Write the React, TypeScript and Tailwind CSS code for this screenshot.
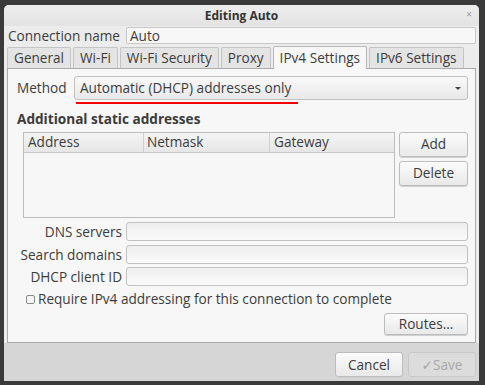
import React from "react";

const font = { fontFamily: '"Open Sans", "DejaVu Sans", sans-serif' };

const Field: React.FC<{ label: string }> = ({ label }) => (
  <div className="flex items-center h-[22.5px]">
    <div className="w-[110px] text-right pr-[4px]">{label}</div>
    <div className="flex-1 h-[19px] rounded-[3px] border border-[#c2c2c2] bg-gradient-to-b from-[#eeeeee] to-[#fafafa]" />
  </div>
);

const Btn: React.FC<{ label: string; className?: string; disabled?: boolean }> = ({ label, className = "", disabled }) => (
  <div
    className={`flex items-center justify-center rounded-[3px] border ${
      disabled ? "border-[#c8c8c8] text-[#a8a8a8] bg-[#dcdcdc]" : "border-[#bcbcbc] bg-gradient-to-b from-[#fbfbfb] to-[#e9e9e9] shadow-[0_1px_0_#d0d0d0]"
    } ${className}`}
  >
    {label}
  </div>
);

const tabs = ["General", "Wi-Fi", "Wi-Fi Security", "Proxy", "IPv4 Settings", "IPv6 Settings"];

export default function App() {
  return (
    <div className="w-[485px] h-[385px] bg-[#3a3a3a] pt-[5px] pl-[4px] text-[13.6px] text-[#3c3c3c] leading-none" style={font}>
      <div className="w-[475px] h-[376px] bg-[#ececec] rounded-t-[5px] flex flex-col overflow-hidden">
        {/* title bar */}
        <div className="h-[21px] flex items-center relative bg-gradient-to-b from-[#ededed] to-[#e3e3e3]">
          <div className="flex-1 text-center font-bold text-[12px] text-[#333]">Editing Auto</div>
          <div className="absolute right-[7px] top-[4px] text-[10px] text-[#9a9a9a]">×</div>
        </div>

        {/* connection name */}
        <div className="flex items-center h-[19px] pl-[4px] pr-[3px]">
          <div className="w-[118px]">Connection name</div>
          <div className="flex-1 h-[17px] border border-[#c8c8c8] bg-[#f7f7f7] rounded-[2px] flex items-center pl-[3px]">Auto</div>
        </div>

        {/* tabs */}
        <div className="flex items-end h-[23px] pl-[3px] gap-[2px]">
          {tabs.map((t) => {
            const active = t === "IPv4 Settings";
            return (
              <div
                key={t}
                className={`px-[6px] flex items-center border border-b-0 rounded-t-[2px] ${
                  active ? "h-[23px] bg-[#f7f7f7] border-[#b8b8b8] relative top-[1px]" : "h-[21px] bg-[#e4e4e4] border-[#c4c4c4]"
                }`}
              >
                {t}
              </div>
            );
          })}
        </div>

        {/* panel */}
        <div className="mx-[3px] h-[275px] border border-[#a9a9a9] bg-[#f7f7f7] pl-[8px] pr-[7px] pt-[7px]">
          <div className="flex items-center">
            <div className="w-[58px] pl-[1px]">Method</div>
            <div className="flex-1 h-[24px] relative rounded-[3px] border border-[#c0c0c0] bg-gradient-to-b from-[#f8f8f8] to-[#e9e9e9] flex items-center pl-[5px]">
              Automatic (DHCP) addresses only
              <div className="absolute right-[6px] top-[10px] w-0 h-0 border-l-[3px] border-r-[3px] border-t-[3px] border-l-transparent border-r-transparent border-t-[#444]" />
              <div className="absolute left-[1px] top-[25px] w-[222px] h-[2px] bg-[#f00000]" />
            </div>
          </div>

          <div className="font-bold mt-[12px] pl-[1px]">Additional static addresses</div>

          <div className="flex mt-[6px] pl-[7px] gap-[4px]">
            <div className="flex-1 h-[86px] border border-[#bdbdbd] bg-[#f7f7f7]">
              <div className="flex h-[20px] border-b border-[#c8c8c8] bg-gradient-to-b from-[#f4f4f4] to-[#e6e6e6]">
                <div className="w-[120px] border-r border-[#cfcfcf] flex items-center pl-[4px]">Address</div>
                <div className="w-[126px] border-r border-[#cfcfcf] flex items-center pl-[3px]">Netmask</div>
                <div className="flex-1 flex items-center pl-[4px]">Gateway</div>
              </div>
            </div>
            <div className="flex flex-col gap-[4px]">
              <Btn label="Add" className="w-[69px] h-[25px]" />
              <Btn label="Delete" className="w-[69px] h-[25px]" />
            </div>
          </div>

          <div className="flex flex-col mt-[3px]">
            <Field label="DNS servers" />
            <Field label="Search domains" />
            <Field label="DHCP client ID" />
          </div>

          <div className="flex items-center mt-[1px] pl-[10px] h-[20px]">
            <div className="w-[9px] h-[9px] border border-[#8a8a8a] rounded-[2px] bg-[#f4f4f4] mr-[3px]" />
            Require IPv4 addressing for this connection to complete
          </div>

          <div className="flex justify-end mt-[4px]">
            <Btn label="Routes…" className="w-[84px] h-[22px]" />
          </div>
        </div>

        {/* bottom bar */}
        <div className="flex-1 bg-[#d6d6d6] flex justify-end items-start pt-[9px] pr-[3px] gap-[5px]">
          <Btn label="Cancel" className="w-[68px] h-[25px]" />
          <Btn label="✓Save" className="w-[68px] h-[25px]" disabled />
        </div>
      </div>
    </div>
  );
}
